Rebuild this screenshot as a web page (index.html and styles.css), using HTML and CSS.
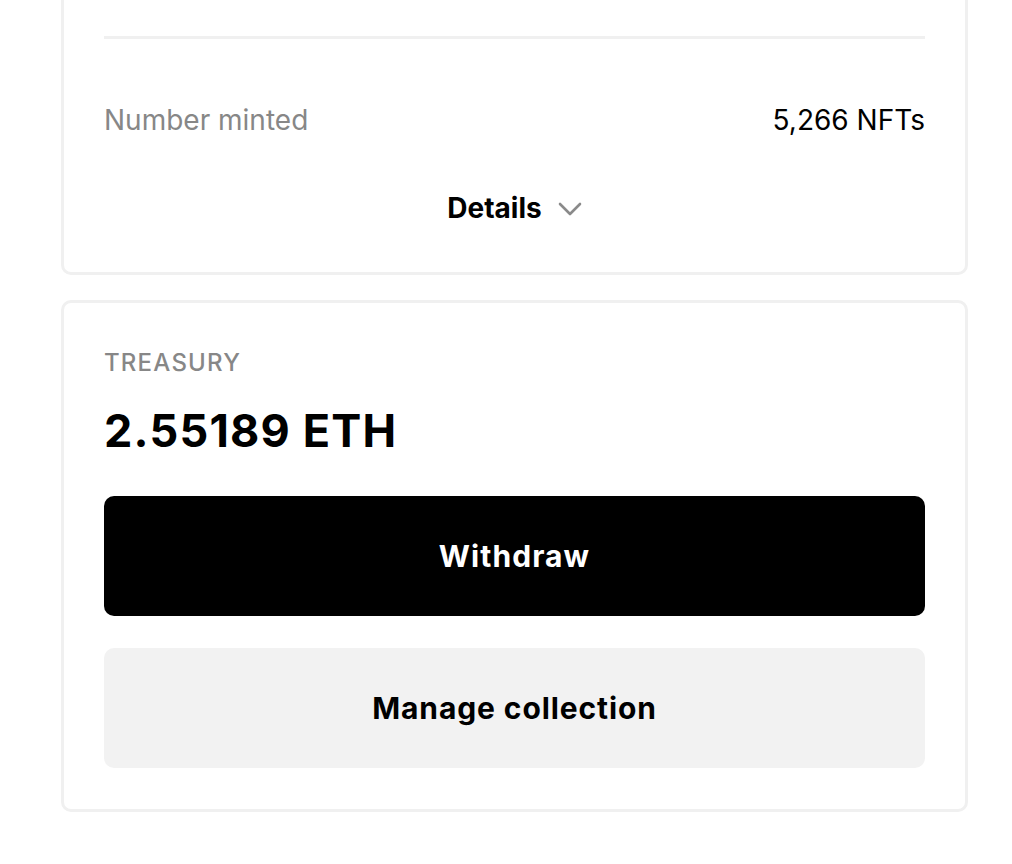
FILE: index.html
```html
<!DOCTYPE html>
<html>
<head>
<meta charset="utf-8">
<link rel="stylesheet" href="styles.css">
</head>
<body>
<div class="page">
  <section class="card card-stats">
    <div class="divider"></div>
    <div class="row">
      <span class="row-label">Number minted</span>
      <span class="row-value">5,266 NFTs</span>
    </div>
    <div class="details">
      <span class="details-text">Details</span>
      <svg class="chevron" width="24" height="14" viewBox="0 0 24 14"><path d="M2 2 L12 12 L22 2" fill="none" stroke="#8a8a8a" stroke-width="2.6" stroke-linecap="round" stroke-linejoin="round"/></svg>
    </div>
  </section>
  <section class="card card-treasury">
    <div class="eyebrow">TREASURY</div>
    <div class="amount">2.55189 ETH</div>
    <button class="btn btn-primary">Withdraw</button>
    <button class="btn btn-secondary">Manage collection</button>
  </section>
</div>
</body>
</html>
```
FILE: styles.css
```css
* { box-sizing: border-box; }
html, body { margin: 0; padding: 0; background: #fff; }
body { font-family: Inter, "Noto Sans", sans-serif; color: #000; overflow: hidden; }
.page {
  width: 907px;
  margin-left: 61px;
  display: flex;
  flex-direction: column;
  gap: 25px;
}
.card {
  border: 3px solid #f0f0f0;
  border-radius: 10px;
  padding: 0 40px;
}
.card-stats {
  margin-top: -60px;
  padding-top: 93px;
  padding-bottom: 46px;
}
.divider { height: 3px; background: #f0f0f0; }
.row {
  margin-top: 63px;
  display: flex;
  justify-content: space-between;
  align-items: center;
  height: 36px;
  font-size: 28px;
  line-height: 36px;
}
.row-label { color: #878787; }
.row-value { color: #000; }
.details {
  margin-top: 52px;
  height: 36px;
  display: flex;
  justify-content: center;
  align-items: center;
  gap: 16px;
  font-size: 28px;
  font-weight: 700;
  line-height: 36px;
}
.chevron { display: block; margin-top: 2px; }
.card-treasury {
  padding-top: 44px;
  padding-bottom: 41px;
  display: flex;
  flex-direction: column;
}
.eyebrow {
  font-size: 24px;
  line-height: 32px;
  letter-spacing: 1.2px;
  font-weight: 500;
  color: #878787;
}
.amount {
  margin-top: 24px;
  font-size: 45px;
  line-height: 56px;
  font-weight: 700;
  letter-spacing: 1.2px;
}
.btn {
  display: block;
  width: 100%;
  height: 120px;
  border: none;
  border-radius: 10px;
  font-family: Inter, "Noto Sans", sans-serif;
  font-size: 30px;
  font-weight: 700;
  padding: 0;
}
.btn-primary { margin-top: 37px; background: #000; color: #fff; letter-spacing: 1.1px; }
.btn-secondary { margin-top: 32px; background: #f2f2f2; color: #000; letter-spacing: 0.9px; }
```
